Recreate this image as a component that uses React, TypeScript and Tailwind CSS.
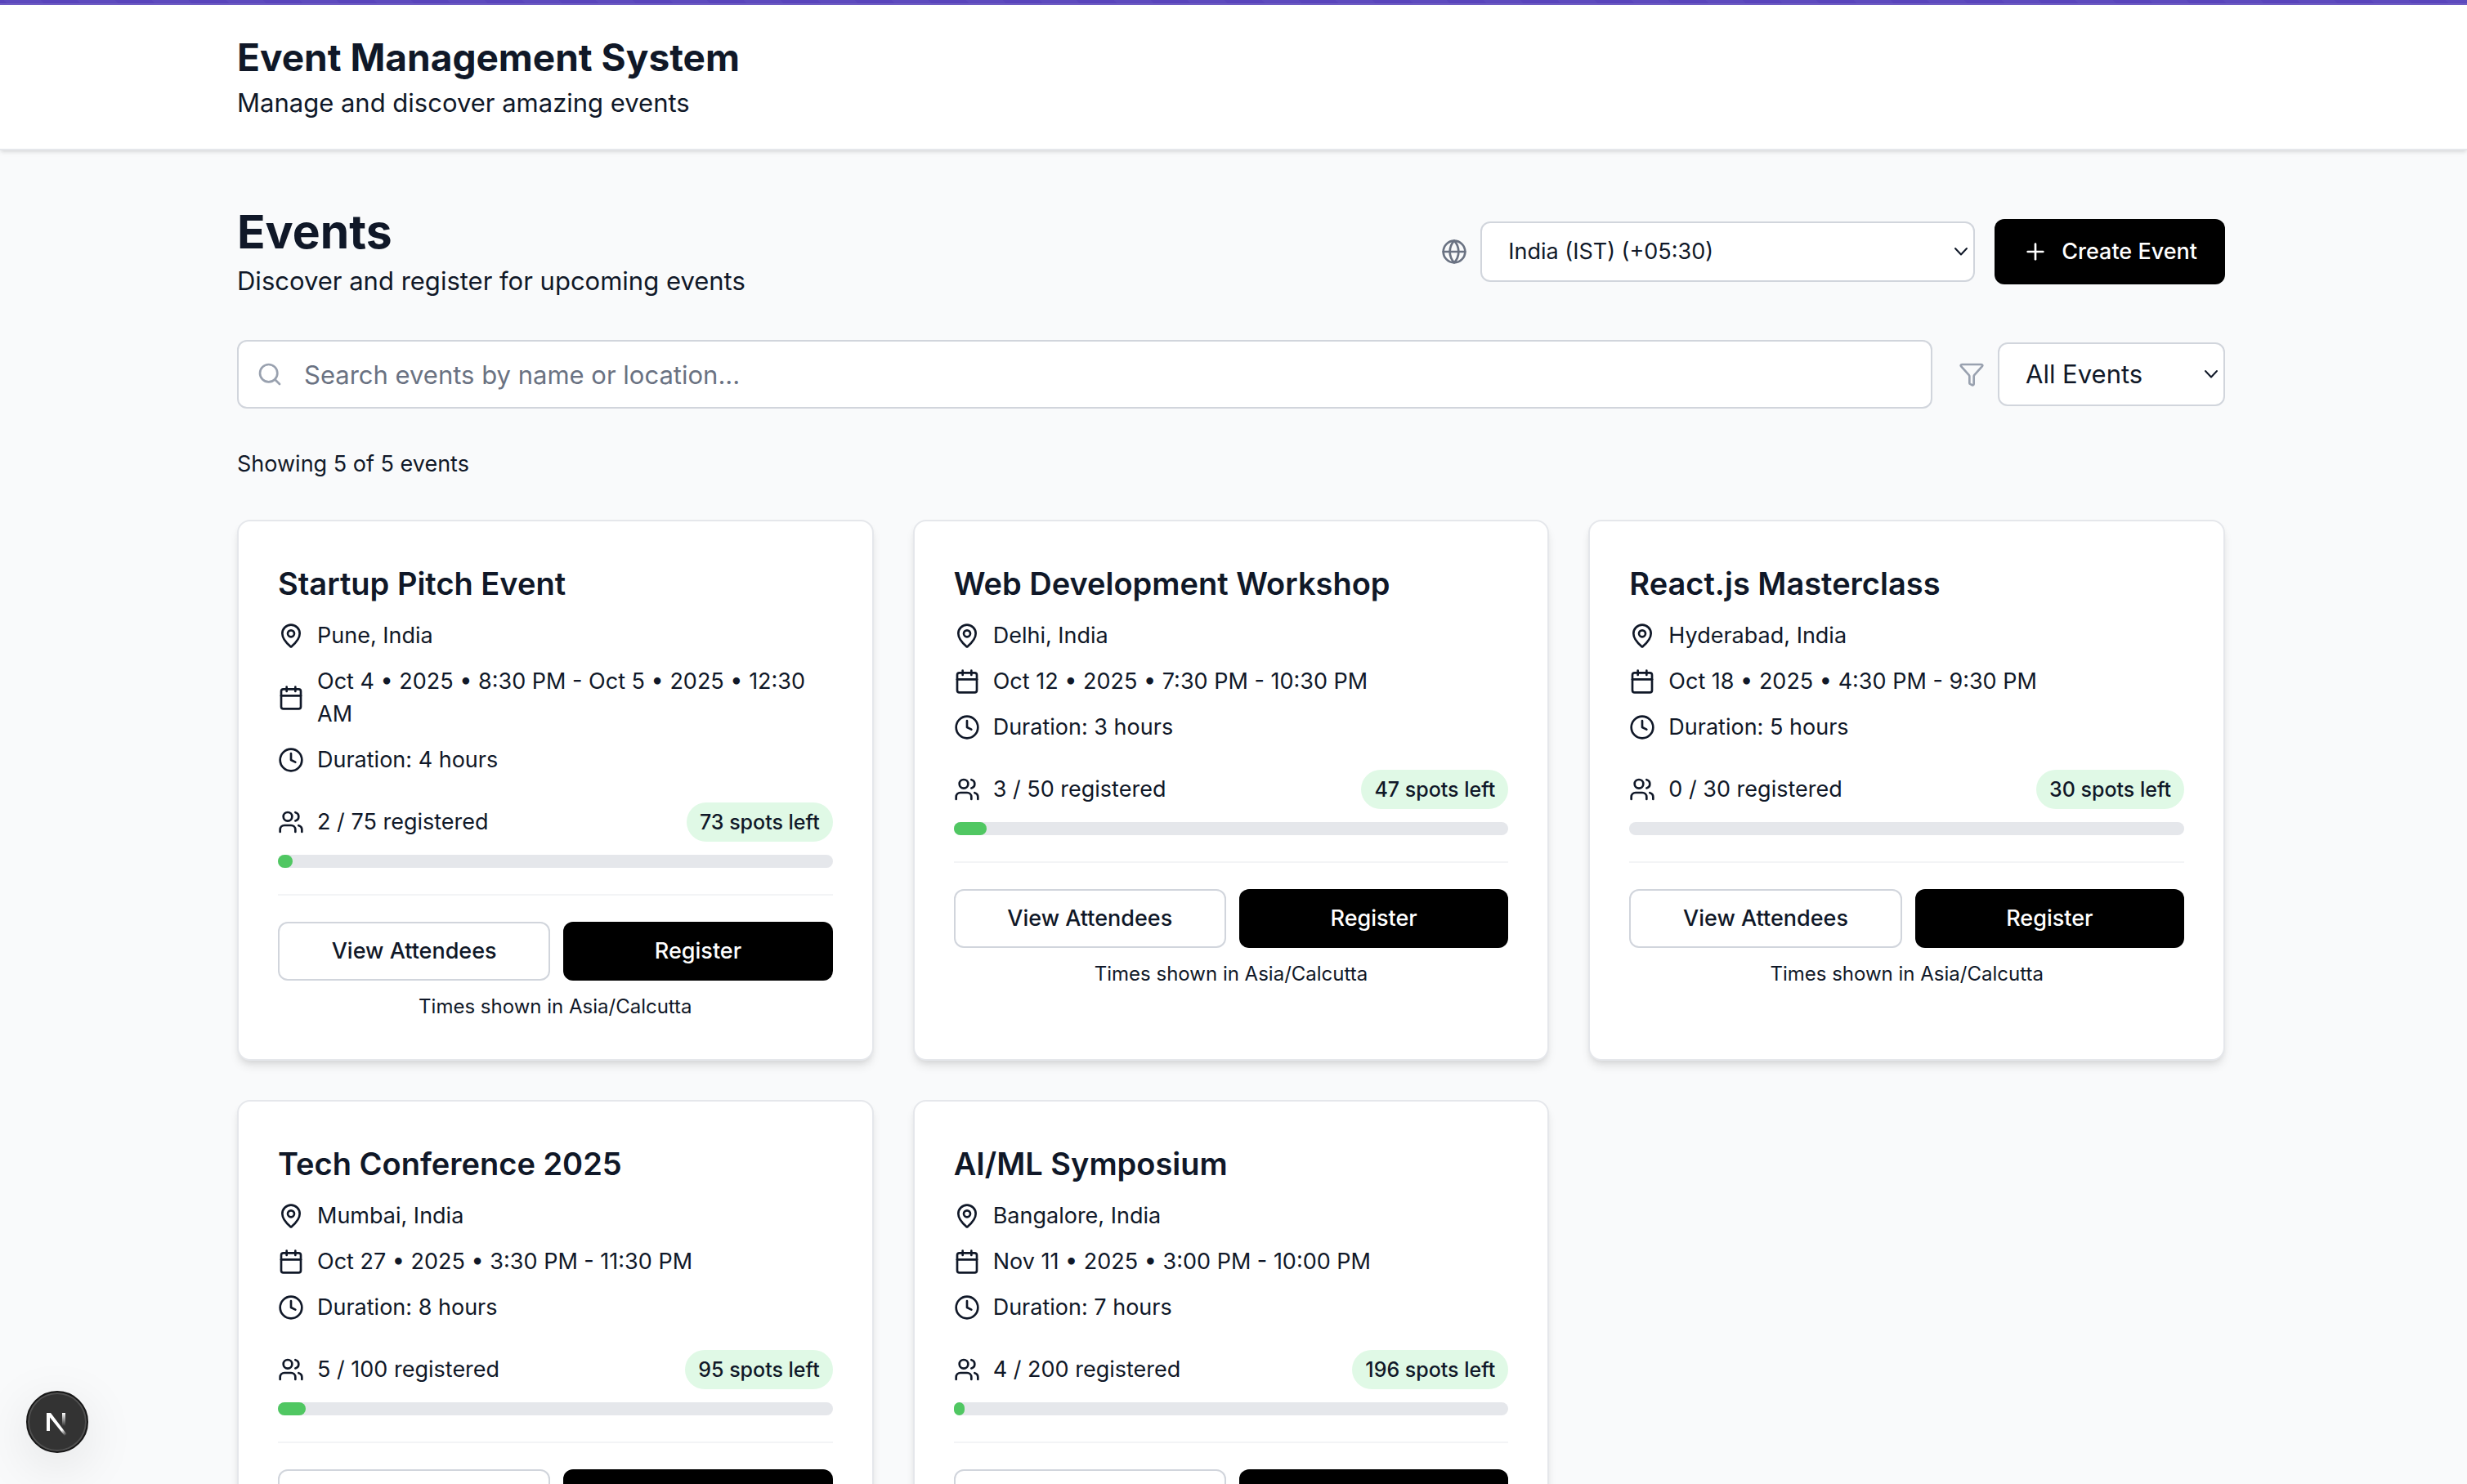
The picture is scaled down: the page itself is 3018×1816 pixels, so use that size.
import { useState } from "react";
import { Calendar, Clock, Filter, Globe, MapPin, Plus, Search, Users } from "lucide-react";

type EventItem = {
  title: string;
  place: string;
  when: string;
  hours: number;
  registered: number;
  capacity: number;
};

const EVENTS: EventItem[] = [
  { title: "Startup Pitch Event", place: "Pune, India", when: "Oct 4 • 2025 • 8:30 PM - Oct 5 • 2025 • 12:30 AM", hours: 4, registered: 2, capacity: 75 },
  { title: "Web Development Workshop", place: "Delhi, India", when: "Oct 12 • 2025 • 7:30 PM - 10:30 PM", hours: 3, registered: 3, capacity: 50 },
  { title: "React.js Masterclass", place: "Hyderabad, India", when: "Oct 18 • 2025 • 4:30 PM - 9:30 PM", hours: 5, registered: 0, capacity: 30 },
  { title: "Tech Conference 2025", place: "Mumbai, India", when: "Oct 27 • 2025 • 3:30 PM - 11:30 PM", hours: 8, registered: 5, capacity: 100 },
  { title: "AI/ML Symposium", place: "Bangalore, India", when: "Nov 11 • 2025 • 3:00 PM - 10:00 PM", hours: 7, registered: 4, capacity: 200 },
];

function SelectArrow() {
  return (
    <svg viewBox="0 0 18 12" className="pointer-events-none absolute right-2 top-1/2 h-3 w-[18px] -translate-y-1/2" fill="none" stroke="#101828" strokeWidth="2" strokeLinecap="round" strokeLinejoin="round" aria-hidden="true">
      <path d="M2 2l7 7.500 7-7.500" />
    </svg>
  );
}

function EventCard({ event }: { event: EventItem }) {
  return (
    <article className="rounded-[16px] border-2 border-gray-200 bg-white p-12 shadow-[0_8px_12px_-2px_rgba(0,0,0,0.1),0_4px_8px_-4px_rgba(0,0,0,0.1)]">
      <h3 className="text-[38px] leading-14 font-semibold">{event.title}</h3>
      <div className="mt-4 flex flex-col gap-4 text-[27px] leading-10">
        <p className="flex items-center gap-4">
          <MapPin className="size-8 shrink-0" />
          {event.place}
        </p>
        <p className="flex items-center gap-4">
          <Calendar className="size-8 shrink-0" />
          {event.when}
        </p>
        <p className="flex items-center gap-4">
          <Clock className="size-8 shrink-0" />
          Duration: {event.hours} hours
        </p>
      </div>
      <div className="mt-8 flex items-center justify-between">
        <p className="flex items-center gap-4 text-[27px] leading-10">
          <Users className="size-8 shrink-0" />
          {event.registered} / {event.capacity} registered
        </p>
        <span className="rounded-full bg-[#e0f9e6] px-4 py-2 text-[25px] leading-8 font-medium">
          {event.capacity - event.registered} spots left
        </span>
      </div>
      <div className="mt-4 h-4 rounded-full bg-gray-200">
        <div className="h-4 rounded-full bg-[#50c762]" style={{ width: `${(event.registered / event.capacity) * 100}%` }} />
      </div>
      <div className="mt-8 flex gap-4 border-t-2 border-gray-100 pt-8">
        <button type="button" className="h-18 flex-1 rounded-[12px] border-2 border-gray-300 px-6 text-[27px] leading-10 font-medium">
          View Attendees
        </button>
        <button type="button" className="h-18 flex-1 rounded-[12px] bg-black px-6 text-[27px] leading-10 font-medium text-white">
          Register
        </button>
      </div>
      <p className="mt-4 text-center text-[24px] leading-8">Times shown in Asia/Calcutta</p>
    </article>
  );
}

function DevToolsBadge() {
  return (
    <button type="button" aria-label="Open developer tools" className="fixed bottom-[38px] left-8 flex size-19 items-center justify-center rounded-full border-2 border-[#171717] bg-[#333333] shadow-[inset_0_0_0_2px_#505050,0_16px_64px_rgba(0,0,0,0.10)]">
      <svg viewBox="0 -6 26 34" className="h-[34px] w-[26px]" fill="none" aria-hidden="true">
        <defs>
          <linearGradient id="diag" x1="14" y1="14" x2="24" y2="27" gradientUnits="userSpaceOnUse">
            <stop stopColor="#fff" />
            <stop offset="0.5" stopColor="#fff" />
            <stop offset="1" stopColor="#fff" stopOpacity="0" />
          </linearGradient>
          <linearGradient id="stem" x1="21" y1="0" x2="21" y2="16" gradientUnits="userSpaceOnUse">
            <stop stopColor="#fff" />
            <stop offset="1" stopColor="#fff" stopOpacity="0" />
          </linearGradient>
        </defs>
        <path d="M0 0h5l20 26.500-3 1.500L4 5.500V22H0z" fill="url(#diag)" />
        <path d="M19 0h4v16h-4z" fill="url(#stem)" />
      </svg>
    </button>
  );
}

export default function App() {
  const [query, setQuery] = useState("");
  const shown = EVENTS.filter((e) => `${e.title} ${e.place}`.toLowerCase().includes(query.toLowerCase()));

  return (
    <div className="h-screen overflow-y-auto bg-gray-50 font-['Inter','Liberation_Sans',sans-serif] text-gray-900 [scrollbar-width:none]">
      <div className="h-1.5 border-b-2 border-[#6f5cc6] bg-[repeating-linear-gradient(45deg,#5944bc_0px,#5944bc_6px,#5d4abe_6px,#5d4abe_38px,#5944bc_38px,#5944bc_64px)]" />
      <header className="border-b-2 border-gray-200 bg-white pr-1.5 shadow-[0_2px_6px_rgba(0,0,0,0.1),0_2px_4px_-2px_rgba(0,0,0,0.1)]">
        <div className="mx-auto max-w-[2560px] px-16 py-8">
          <h1 className="text-[46px] leading-16 font-bold">Event Management System</h1>
          <p className="text-[31px] leading-12">Manage and discover amazing events</p>
        </div>
      </header>
      <main className="pr-1.5">
        <div className="mx-auto max-w-[2560px] px-16 py-16">
          <div className="flex items-center justify-between">
            <div>
              <h2 className="text-[57px] leading-18 font-bold">Events</h2>
              <p className="text-[31px] leading-12">Discover and register for upcoming events</p>
            </div>
            <div className="flex items-center gap-6">
              <div className="flex items-center gap-4">
                <Globe className="size-8 text-gray-500" />
                <div className="relative">
                  <select aria-label="Time zone" className="block h-[74px] w-[605px] appearance-none rounded-[12px] border-2 border-gray-300 bg-white px-8 text-[27px]">
                    <option>India (IST) (+05:30)</option>
                  </select>
                  <SelectArrow />
                </div>
              </div>
              <button type="button" className="flex h-20 items-center gap-4 rounded-[12px] bg-black px-[34px] text-[27px] leading-10 font-medium text-white">
                <Plus className="size-8" />
                Create Event
              </button>
            </div>
          </div>
          <div className="mt-12 flex items-center gap-8">
            <div className="relative flex-1">
              <Search className="pointer-events-none absolute left-6 top-1/2 size-8 -translate-y-1/2 text-gray-400" />
              <input
                type="search"
                aria-label="Search events"
                placeholder="Search events by name or location..."
                value={query}
                onChange={(e) => setQuery(e.target.value)}
                className="block h-21 w-full rounded-[12px] border-2 border-gray-300 bg-white pr-8 pl-20 text-[31px] placeholder:text-gray-500"
              />
            </div>
            <div className="flex items-center gap-4">
              <Filter className="size-8 text-gray-400" />
              <div className="relative">
                <select aria-label="Filter events" className="block h-[78px] w-[278px] appearance-none rounded-[12px] border-2 border-gray-300 bg-white px-8 text-[31px]">
                  <option>All Events</option>
                </select>
                <SelectArrow />
              </div>
            </div>
          </div>
          <p className="mt-12 text-[27px] leading-10">
            Showing {shown.length} of {EVENTS.length} events
          </p>
          <div className="mt-12 grid grid-cols-3 gap-12">
            {shown.map((event) => (
              <EventCard key={event.title} event={event} />
            ))}
          </div>
        </div>
      </main>
      <DevToolsBadge />
    </div>
  );
}
